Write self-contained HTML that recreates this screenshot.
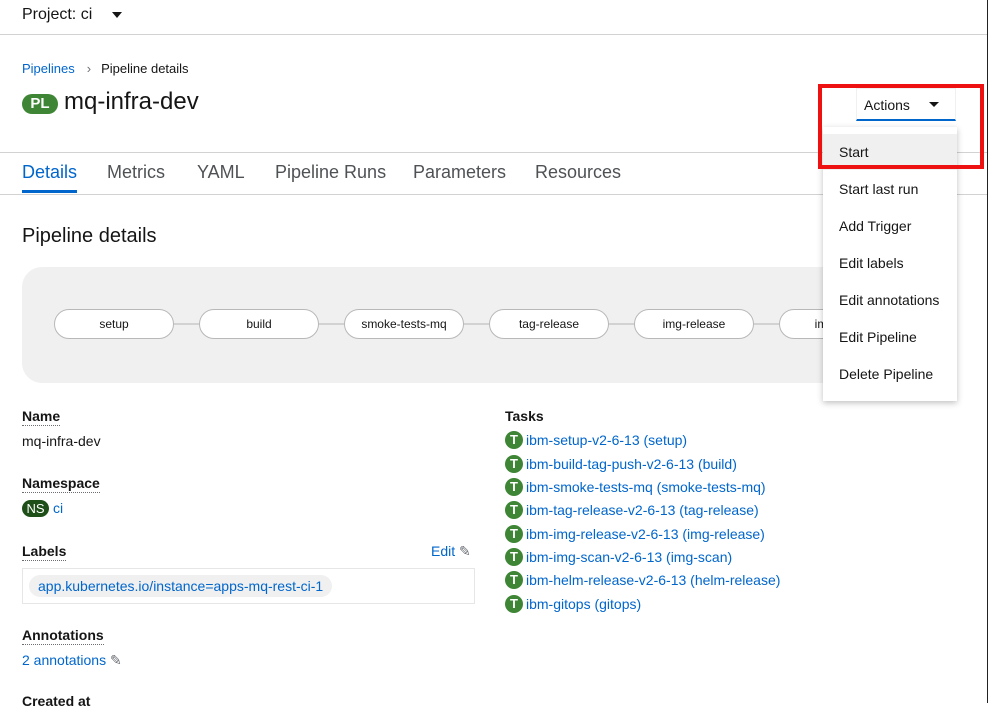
<!DOCTYPE html>
<html><head><style>
*{box-sizing:border-box;margin:0;padding:0}
body{width:988px;height:703px;overflow:hidden;background:#fff;font-family:"Liberation Sans",sans-serif;color:#151515;position:relative}
.a{position:absolute;white-space:nowrap}
.link{color:#0066cc}
.hr{position:absolute;left:0;width:987px;height:1px;background:#d2d2d2}
.node{position:absolute;top:309px;width:120px;height:30px;border:1px solid #b8b8b8;border-radius:15px;background:#fff;font-size:12px;text-align:center;line-height:28px;color:#151515}
.dl{font-size:14px;font-weight:bold;border-bottom:1px dotted #6a6e73;padding-bottom:1px}
.t{position:absolute;left:505px;font-size:14px;color:#0066cc;white-space:nowrap;height:18px;line-height:18px}
.t b{display:inline-block;width:18px;height:18px;border-radius:9px;background:#3e8635;color:#fff;font-size:13px;text-align:center;line-height:18px;margin-right:3px;vertical-align:top}
.mi{position:absolute;left:839px;font-size:14px}
</style></head><body>
<div style="position:absolute;right:0;top:0;width:1px;height:703px;background:#222"></div>
<div class="a" style="left:22px;top:6px;font-size:16px">Project: ci</div>
<div class="a" style="left:112px;top:12px;width:0;height:0;border-left:5px solid transparent;border-right:5px solid transparent;border-top:6px solid #151515"></div>
<div class="hr" style="top:34px"></div>
<div class="a" style="left:22px;top:61px;font-size:13px"><span class="link">Pipelines</span><span style="color:#6a6e73;margin:0 10px 0 12px">›</span>Pipeline details</div>
<div class="a" style="left:22px;top:94px;width:36px;height:20px;border-radius:10px;background:#3e8635;color:#fff;font-size:15px;font-weight:bold;text-align:center;line-height:20px">PL</div>
<div class="a" style="left:64px;top:88px;font-size:24px">mq-infra-dev</div>
<div class="hr" style="top:152px"></div>
<div class="hr" style="top:194px"></div>
<div class="a" style="left:22px;top:162px;font-size:18px;color:#0066cc">Details</div>
<div class="a" style="left:22px;top:190px;width:55px;height:3px;background:#0066cc"></div>
<div class="a" style="left:107px;top:162px;font-size:18px;color:#4f5255">Metrics</div>
<div class="a" style="left:197px;top:162px;font-size:18px;color:#4f5255">YAML</div>
<div class="a" style="left:275px;top:162px;font-size:18px;color:#4f5255">Pipeline Runs</div>
<div class="a" style="left:413px;top:162px;font-size:18px;color:#4f5255">Parameters</div>
<div class="a" style="left:535px;top:162px;font-size:18px;color:#4f5255">Resources</div>
<div class="a" style="left:22px;top:225px;font-size:20px">Pipeline details</div>
<div class="a" style="left:22px;top:267px;width:900px;height:116px;border-radius:20px;background:#f0f0f0"></div>
<div class="a" style="left:100px;top:323px;width:750px;height:2px;background:#d2d2d2"></div>
<div class="node" style="left:54px">setup</div>
<div class="node" style="left:199px">build</div>
<div class="node" style="left:344px">smoke-tests-mq</div>
<div class="node" style="left:489px">tag-release</div>
<div class="node" style="left:634px">img-release</div>
<div class="node" style="left:779px">img-scan</div>
<div class="a" style="left:22px;top:408px"><span class="dl">Name</span></div>
<div class="a" style="left:22px;top:433px;font-size:14px">mq-infra-dev</div>
<div class="a" style="left:22px;top:475px"><span class="dl">Namespace</span></div>
<div class="a" style="left:22px;top:500px;width:27px;height:17px;border-radius:9px;background:#1e4f18;color:#fff;font-size:13px;text-align:center;line-height:17px">NS</div>
<div class="a link" style="left:53px;top:500px;font-size:14px">ci</div>
<div class="a" style="left:22px;top:543px"><span class="dl">Labels</span></div>
<div class="a link" style="left:431px;top:543px;font-size:14px">Edit <span style="color:#6a6e73">✎</span></div>
<div class="a" style="left:22px;top:568px;width:453px;height:36px;border:1px solid #e6e6e6"></div>
<div class="a link" style="left:29px;top:575px;height:22px;border-radius:11px;background:#f0f0f0;padding:0 9px;font-size:14px;line-height:22px">app.kubernetes.io/instance=apps-mq-rest-ci-1</div>
<div class="a" style="left:22px;top:627px"><span class="dl">Annotations</span></div>
<div class="a link" style="left:22px;top:652px;font-size:14px">2 annotations <span style="color:#6a6e73">✎</span></div>
<div class="a" style="left:22px;top:693px;font-size:14px;font-weight:bold">Created at</div>
<div class="a" style="left:505px;top:408px;font-size:14px;font-weight:bold">Tasks</div>
<div class="t" style="top:431px"><b>T</b>ibm-setup-v2-6-13 (setup)</div>
<div class="t" style="top:455px"><b>T</b>ibm-build-tag-push-v2-6-13 (build)</div>
<div class="t" style="top:478px"><b>T</b>ibm-smoke-tests-mq (smoke-tests-mq)</div>
<div class="t" style="top:501px"><b>T</b>ibm-tag-release-v2-6-13 (tag-release)</div>
<div class="t" style="top:525px"><b>T</b>ibm-img-release-v2-6-13 (img-release)</div>
<div class="t" style="top:548px"><b>T</b>ibm-img-scan-v2-6-13 (img-scan)</div>
<div class="t" style="top:571px"><b>T</b>ibm-helm-release-v2-6-13 (helm-release)</div>
<div class="t" style="top:595px"><b>T</b>ibm-gitops (gitops)</div>
<div class="a" style="left:856px;top:88px;width:100px;height:33px;border:1px solid #f0f0f0;border-bottom:2px solid #0066cc"></div>
<div class="a" style="left:864px;top:97px;font-size:14px">Actions</div>
<div class="a" style="left:929px;top:102px;width:0;height:0;border-left:5px solid transparent;border-right:5px solid transparent;border-top:5px solid #151515"></div>
<div class="a" style="left:823px;top:127px;width:134px;height:274px;background:#fff;box-shadow:0 2px 6px rgba(0,0,0,.25)"></div>
<div class="a" style="left:823px;top:134px;width:134px;height:36px;background:#f0f0f0"></div>
<div class="mi" style="top:144px">Start</div>
<div class="mi" style="top:181px">Start last run</div>
<div class="mi" style="top:218px">Add Trigger</div>
<div class="mi" style="top:255px">Edit labels</div>
<div class="mi" style="top:292px">Edit annotations</div>
<div class="mi" style="top:329px">Edit Pipeline</div>
<div class="mi" style="top:366px">Delete Pipeline</div>
<div class="a" style="left:818px;top:84px;width:166px;height:85px;border:4px solid #ee1111"></div>
</body></html>
